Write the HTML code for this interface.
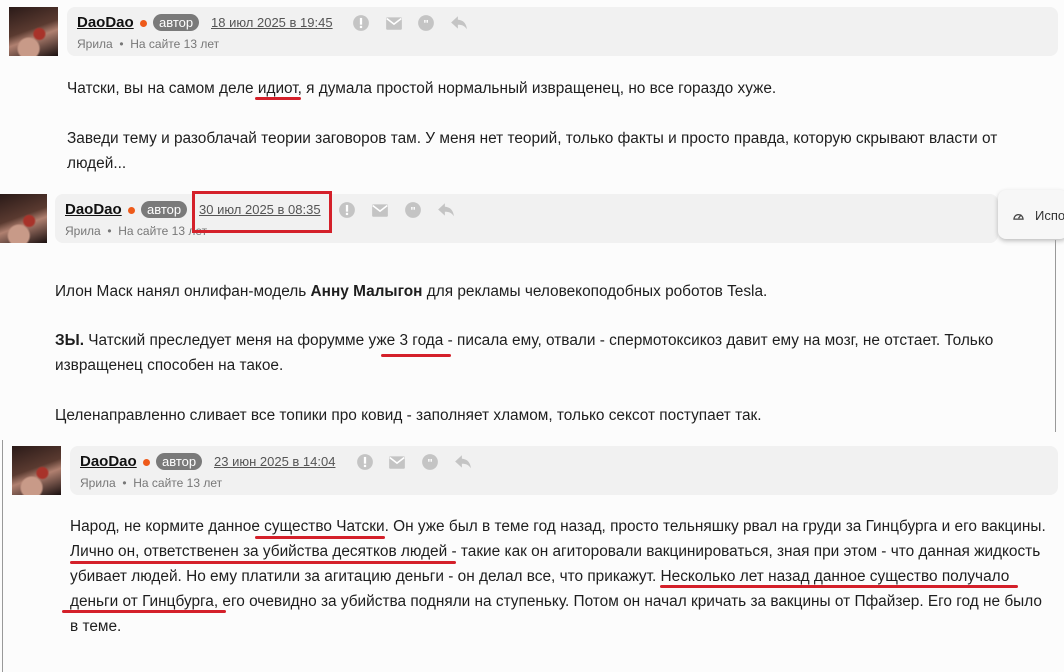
<!DOCTYPE html>
<html><head><meta charset="utf-8"><style>
body{margin:0;width:1064px;height:672px;background:#fcfcfc;font-family:"Liberation Sans","DejaVu Sans",sans-serif;color:#1e1e1e;position:relative;overflow:hidden}
.abs{position:absolute}
.av{position:absolute;width:49px;height:49px;background:radial-gradient(circle at 62% 55%,#a8332a 0 5px,transparent 7px),radial-gradient(circle at 40% 85%,#c89a88 0 10px,transparent 12px),linear-gradient(160deg,#2a1a18 0%,#5a3a30 45%,#b08070 60%,#1a1010 100%)}
.hd{position:absolute;height:49px;background:#f1f1f1;border-radius:8px;right:6px}
.nm{position:absolute;left:10px;top:7px;font-size:15px;font-weight:bold;text-decoration:underline;color:#111}
.dot{position:absolute;top:13px;width:7px;height:7px;border-radius:50%;background:#ee5a1a}
.tag{position:absolute;top:7px;height:17px;line-height:17px;padding:0 6px;border-radius:9px;background:#7a7a7a;color:#fff;font-size:13px}
.dt{position:absolute;top:8px;font-size:13px;color:#555;text-decoration:underline}
.sub{position:absolute;left:10px;top:30px;font-size:12px;color:#777}
.ic{position:absolute;top:7px;width:18px;height:18px}
.tx{position:absolute;font-size:15.4px;line-height:25px;white-space:nowrap}
.rl{position:absolute;height:3px;background:#d4202a;border-radius:2px}
</style></head><body>

<div class="av" style="left:9px;top:7px"></div>
<div class="hd" style="left:67px;top:7px">
 <div class="nm">DaoDao</div><div class="dot" style="left:73px"></div>
 <div class="tag" style="left:86px">автор</div>
 <div class="dt" style="left:144px">18 июл 2025 в 19:45</div>
 <div class="sub">Ярила &nbsp;•&nbsp; На сайте 13 лет</div>
 <svg class="ic" style="left:285px" viewBox="0 0 16 16"><circle cx="8" cy="8" r="7" fill="#c4c4c4"/><rect x="7" y="3.5" width="2" height="6" fill="#fff"/><rect x="7" y="10.5" width="2" height="2" fill="#fff"/></svg>
 <svg class="ic" style="left:318px" viewBox="0 0 16 16"><rect x="1" y="3" width="14" height="11" rx="1" fill="#c4c4c4"/><path d="M1.5 4l6.5 5 6.5-5" stroke="#fff" stroke-width="1.4" fill="none"/></svg>
 <svg class="ic" style="left:350px" viewBox="0 0 16 16"><circle cx="8" cy="8" r="7" fill="#c4c4c4"/><text x="8" y="12" font-size="10" text-anchor="middle" fill="#fff" font-weight="bold">"</text></svg>
 <svg class="ic" style="left:383px" viewBox="0 0 16 16"><path d="M7 2L1 7.5 7 13V9.5c4 0 6 1 8 4-0.5-5-3-8-8-8.5z" fill="#c4c4c4"/></svg>
</div>
<div class="tx" style="left:67px;top:76px">Чатски, вы на самом деле идиот, я думала простой нормальный извращенец, но все гораздо хуже.</div>
<div class="rl" style="left:255px;top:97px;width:46px"></div>
<div class="tx" style="left:67px;top:126px">Заведи тему и разоблачай теории заговоров там. У меня нет теорий, только факты и просто правда, которую скрывают власти от<br>людей...</div>

<div class="av" style="left:0;top:194px;width:47px"></div>
<div class="hd" style="left:55px;top:194px;right:66px">
 <div class="nm">DaoDao</div><div class="dot" style="left:73px"></div>
 <div class="tag" style="left:86px">автор</div>
 <div class="dt" style="left:144px">30 июл 2025 в 08:35</div>
 <div class="sub">Ярила &nbsp;•&nbsp; На сайте 13 лет</div>
 <svg class="ic" style="left:283px" viewBox="0 0 16 16"><circle cx="8" cy="8" r="7" fill="#c4c4c4"/><rect x="7" y="3.5" width="2" height="6" fill="#fff"/><rect x="7" y="10.5" width="2" height="2" fill="#fff"/></svg>
 <svg class="ic" style="left:316px" viewBox="0 0 16 16"><rect x="1" y="3" width="14" height="11" rx="1" fill="#c4c4c4"/><path d="M1.5 4l6.5 5 6.5-5" stroke="#fff" stroke-width="1.4" fill="none"/></svg>
 <svg class="ic" style="left:349px" viewBox="0 0 16 16"><circle cx="8" cy="8" r="7" fill="#c4c4c4"/><text x="8" y="12" font-size="10" text-anchor="middle" fill="#fff" font-weight="bold">"</text></svg>
 <svg class="ic" style="left:382px" viewBox="0 0 16 16"><path d="M7 2L1 7.5 7 13V9.5c4 0 6 1 8 4-0.5-5-3-8-8-8.5z" fill="#c4c4c4"/></svg>
</div>
<div class="abs" style="left:192px;top:191px;width:134px;height:36px;border:3px solid #d4202a"></div>
<div class="abs" style="left:998px;top:190px;width:70px;height:49px;background:#f7f7f7;border-radius:8px;box-shadow:0 2px 5px rgba(0,0,0,.25);font-size:13px;color:#333">
 <svg style="position:absolute;left:14px;top:20px" width="13" height="11" viewBox="0 0 14 12"><path d="M2 10a5 5 0 1 1 10 0z" fill="none" stroke="#444" stroke-width="1.4"/><path d="M7 9l3-4" stroke="#444" stroke-width="1.4"/></svg>
 <span style="position:absolute;left:37px;top:18px">Испо</span>
</div>
<div class="abs" style="left:1055px;top:240px;width:1px;height:192px;background:#999"></div>
<div class="tx" style="left:55px;top:279px">Илон Маск нанял онлифан-модель <b>Анну Малыгон</b> для рекламы человекоподобных роботов Tesla.</div>
<div class="tx" style="left:55px;top:328px"><b>ЗЫ.</b> Чатский преследует меня на форумме уже 3 года - писала ему, отвали - спермотоксикоз давит ему на мозг, не отстает. Только<br>извращенец способен на такое.</div>
<div class="rl" style="left:381px;top:354px;width:70px"></div>
<div class="tx" style="left:55px;top:403px">Целенаправленно сливает все топики про ковид - заполняет хламом, только сексот поступает так.</div>

<div class="abs" style="left:2px;top:440px;width:1px;height:232px;background:#999"></div>
<div class="av" style="left:12px;top:446px"></div>
<div class="hd" style="left:70px;top:446px">
 <div class="nm">DaoDao</div><div class="dot" style="left:73px"></div>
 <div class="tag" style="left:86px">автор</div>
 <div class="dt" style="left:144px">23 июн 2025 в 14:04</div>
 <div class="sub">Ярила &nbsp;•&nbsp; На сайте 13 лет</div>
 <svg class="ic" style="left:286px" viewBox="0 0 16 16"><circle cx="8" cy="8" r="7" fill="#c4c4c4"/><rect x="7" y="3.5" width="2" height="6" fill="#fff"/><rect x="7" y="10.5" width="2" height="2" fill="#fff"/></svg>
 <svg class="ic" style="left:318px" viewBox="0 0 16 16"><rect x="1" y="3" width="14" height="11" rx="1" fill="#c4c4c4"/><path d="M1.5 4l6.5 5 6.5-5" stroke="#fff" stroke-width="1.4" fill="none"/></svg>
 <svg class="ic" style="left:351px" viewBox="0 0 16 16"><circle cx="8" cy="8" r="7" fill="#c4c4c4"/><text x="8" y="12" font-size="10" text-anchor="middle" fill="#fff" font-weight="bold">"</text></svg>
 <svg class="ic" style="left:384px" viewBox="0 0 16 16"><path d="M7 2L1 7.5 7 13V9.5c4 0 6 1 8 4-0.5-5-3-8-8-8.5z" fill="#c4c4c4"/></svg>
</div>
<div class="tx" style="left:70px;top:514px;font-size:15.4px">Народ, не кормите данное существо Чатски. Он уже был в теме год назад, просто тельняшку рвал на груди за Гинцбурга и его вакцины.<br>Лично он, ответственен за убийства десятков людей - такие как он агиторовали вакцинироваться, зная при этом - что данная жидкость<br>убивает людей. Но ему платили за агитацию деньги - он делал все, что прикажут. Несколько лет назад данное существо получало<br>деньги от Гинцбурга, его очевидно за убийства подняли на ступеньку. Потом он начал кричать за вакцины от Пфайзер. Его год не было<br>в теме.</div>
<div class="rl" style="left:255px;top:536px;width:130px"></div>
<div class="rl" style="left:70px;top:561px;width:386px"></div>
<div class="rl" style="left:660px;top:585px;width:358px"></div>
<div class="rl" style="left:62px;top:610px;width:164px"></div>
</body></html>
